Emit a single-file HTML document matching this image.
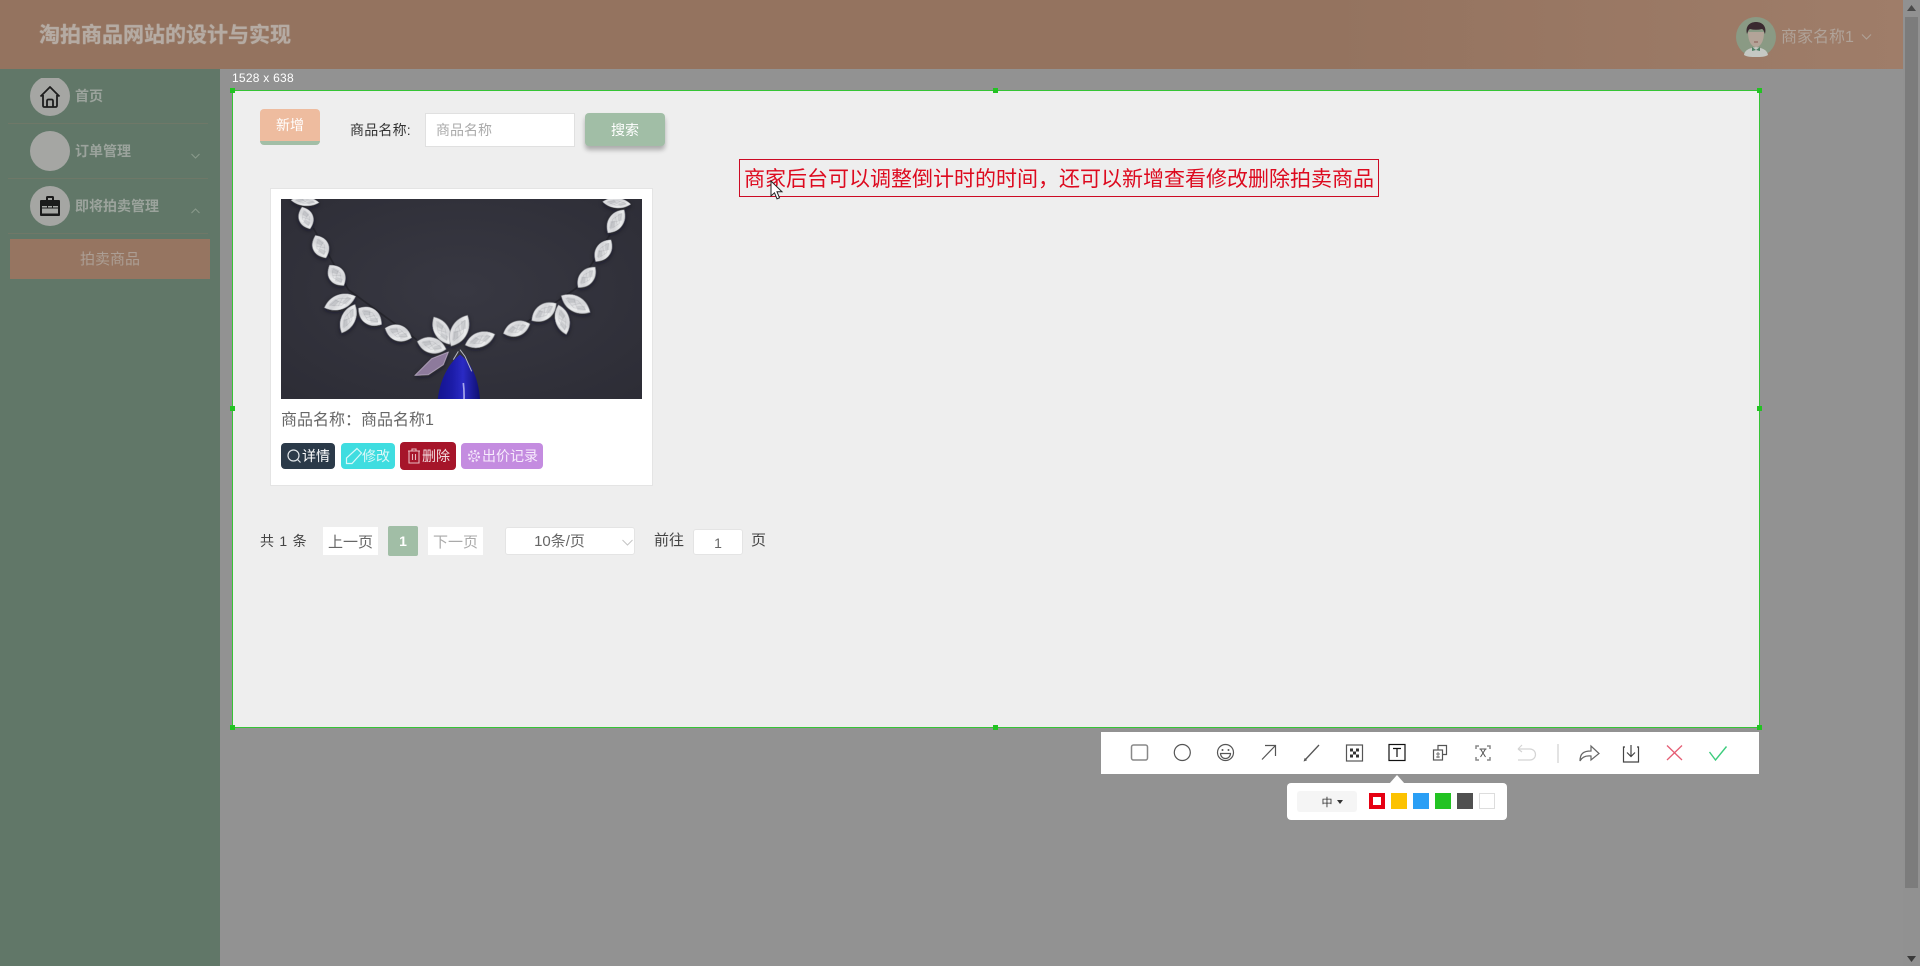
<!DOCTYPE html>
<html lang="zh-CN">
<head>
<meta charset="utf-8">
<title>淘拍商品网站的设计与实现</title>
<style>
html,body{margin:0;padding:0;width:1920px;height:966px;overflow:hidden;background:#929292;}
body{position:relative;font-family:"Liberation Sans","Noto Sans CJK SC",sans-serif;font-size:14px;}
.a{position:absolute;box-sizing:border-box;white-space:nowrap;}
.c{display:flex;align-items:center;justify-content:center;}
.t{line-height:20px;height:20px;}
.circle{left:30px;width:40px;height:40px;border-radius:50%;background:#a5a6a3;}
.mi{left:75px;color:#9ba39c;font-size:14px;font-weight:700;}
.dv{left:8px;width:200px;height:1px;background:#6f7868;}
.btn{color:#fff;border-radius:4px;top:443px;height:26px;}
.h{width:5px;height:5px;background:#22c322;}
.sw{top:793px;width:16px;height:16px;}
.pg{font-size:15px;}
svg{display:block;}
</style>
</head>
<body>
<!-- header -->
<div class="a" style="left:0;top:0;width:1903px;height:69px;background:linear-gradient(90deg,#94735f 0,#94735f 70%,#9f7d69 100%)"></div>
<div class="a" style="left:39px;top:22px;height:28px;line-height:28px;font-size:21px;font-weight:700;color:#b5aba3;text-shadow:0 0 1px #b5aba3">淘拍商品网站的设计与实现</div>
<svg class="a" style="left:1736px;top:17px" width="40" height="40" viewBox="0 0 40 40">
<circle cx="20" cy="20" r="20" fill="#8a9a84"/>
<path d="M8 38c1-6 7-7 12-8 5 1 11 2 12 8-3 2-7 2-12 2s-9 0-12-2z" fill="#c5c8c3"/>
<path d="M16 30l4 3 4-3v4l-4-1-4 1z" fill="#4f8066"/>
<path d="M12 15c0 10 4 15 8 15s8-5 8-15z" fill="#b3a498"/>
<path d="M11 17c-2-8 3-12 9-12s11 4 9 12c-1-2-1-4-3-5-4 1-8 1-12 0-2 1-2 3-3 5z" fill="#3a2a30"/>
<path d="M18 25h4" stroke="#8a5a55" stroke-width="1"/>
</svg>
<div class="a t" style="left:1781px;top:28px;font-size:16px;color:#b0a399">商家名称1</div>
<svg class="a" style="left:1861px;top:33px" width="11" height="8" viewBox="0 0 11 8"><path d="M1 1.500l4.500 4.500L10 1.500" fill="none" stroke="#b0a399"/></svg>

<!-- sidebar -->
<div class="a" style="left:0;top:69px;width:220px;height:897px;background:#617768"></div>
<div class="a" style="left:30px;top:78px;width:40px;height:38px;overflow:hidden"><div class="a circle" style="left:0;top:-2px"></div>
<svg class="a" style="left:9px;top:7px" width="22" height="24" viewBox="0 0 22 24"><path d="M1.500 11.500L11 2l9.500 9.500M4 10v10.500q0 1.500 1.500 1.500h11q1.500 0 1.500-1.500V10M8 22v-6q0-1.500 1.500-1.500h3q1.500 0 1.500 1.500v6" fill="none" stroke="#1d1d1d" stroke-width="1.800" stroke-linejoin="round"/></svg></div>
<div class="a t mi" style="top:86px">首页</div>
<div class="a dv" style="top:123px"></div>
<div class="a circle" style="top:131px"></div>
<div class="a t mi" style="top:141px">订单管理</div>
<svg class="a" style="left:191px;top:153px" width="9" height="6" viewBox="0 0 9 6"><path d="M.5 1l4 4 4-4" fill="none" stroke="#8a9a8c"/></svg>
<div class="a dv" style="top:178px"></div>
<div class="a circle" style="top:186px"></div>
<svg class="a" style="left:39px;top:195px" width="22" height="22" viewBox="0 0 22 22"><path d="M7 5V2.500Q7 1 8.500 1h5Q15 1 15 2.500V5h5q1 0 1 1v14q0 1-1 1H2q-1 0-1-1V6q0-1 1-1zM9 3v2h4V3zM3 11v1.500h5V11h1v1.500h4V11h1v1.500h5V11z" fill="#1b1b1b" fill-rule="evenodd"/><path d="M3 13.500h16v5H3z" fill="#a5a6a3"/></svg>
<div class="a t mi" style="top:196px">即将拍卖管理</div>
<svg class="a" style="left:191px;top:208px" width="9" height="6" viewBox="0 0 9 6"><path d="M.5 5l4-4 4 4" fill="none" stroke="#8a9a8c"/></svg>
<div class="a dv" style="top:233px"></div>
<div class="a c" style="left:10px;top:239px;width:200px;height:40px;background:#967561;color:#ac9e94;font-size:15px;padding-bottom:2px">拍卖商品</div>

<!-- selection label -->
<div class="a" style="left:232px;top:70px;height:16px;line-height:16px;color:#fff;font-size:12px;letter-spacing:.25px">1528 x 638</div>

<!-- selection -->
<div class="a" style="left:232px;top:90px;width:1528px;height:638px;background:#eeeeee;border:1px solid #35c435"></div>

<!-- toolbar form -->
<div class="a c" style="left:260px;top:109px;width:60px;height:36px;background:#eebc9f;border-bottom:4px solid #a2bea6;border-radius:4px;color:#fff;font-size:14px">新增</div>
<div class="a t" style="left:350px;top:120px;color:#333;letter-spacing:.2px">商品名称:</div>
<div class="a" style="left:425px;top:113px;width:150px;height:34px;background:#fff;border:1px solid #e0e0e0;line-height:32px;padding-left:10px;color:#aaa">商品名称</div>
<div class="a c" style="left:585px;top:113px;width:80px;height:33px;background:#a1bea6;border-radius:4px;color:#fff;box-shadow:0 4px 5px rgba(0,0,0,.28)">搜索</div>

<!-- annotation -->
<div class="a c" style="left:739px;top:159px;width:640px;height:38px;border:1px solid #cc0a24;color:#dd0a1f;font-size:21px">商家后台可以调整倒计时的时间&#xFF0C;还可以新增查看修改删除拍卖商品</div>

<!-- card -->
<div class="a" style="left:270px;top:188px;width:383px;height:298px;background:#fff;border:1px solid #e4e4e4"></div>
<svg class="a" style="left:281px;top:199px" width="361" height="200" viewBox="3 3 1083 600" preserveAspectRatio="none">
<defs>
<radialGradient id="bg" cx="50%" cy="45%" r="70%"><stop offset="0" stop-color="#383842"/><stop offset="1" stop-color="#2d2d36"/></radialGradient>
<linearGradient id="dm" x1="0" y1="0" x2="1" y2="1"><stop offset="0" stop-color="#eeeef0"/><stop offset=".45" stop-color="#d4d5d8"/><stop offset=".7" stop-color="#ecedee"/><stop offset="1" stop-color="#acaeb3"/></linearGradient>
<linearGradient id="bl" x1="0" y1="0" x2="1" y2="0"><stop offset="0" stop-color="#14148f"/><stop offset=".35" stop-color="#1c1ca8"/><stop offset=".6" stop-color="#2a2ac4"/><stop offset="1" stop-color="#0f0f70"/></linearGradient>
<filter id="soft" x="-5%" y="-5%" width="110%" height="110%"><feDropShadow dx="0" dy="5" stdDeviation="6" flood-color="#14141a" flood-opacity=".6"/><feGaussianBlur stdDeviation=".7"/></filter>
<g id="m"><path d="M-50 0C-34-22-18-30 0-30S34-22 50 0C34 22 18 30 0 30S-34 22-50 0z" fill="url(#dm)" stroke="#888a90" stroke-width="1.500"/><path d="M-34-6L-10-18-2-4-20 9zM6 4L26-11 36 3 14 18z" fill="#a8aab0" opacity=".4"/><path d="M-34 0L0-16 34 0 0 16zM-12-13L10 12M12-13L-9 13" fill="none" stroke="#9a9ca2" stroke-width="1.500" opacity=".5"/></g>
</defs>
<rect x="0" y="0" width="1092" height="612" fill="url(#bg)"/>
<path d="M100 90L205 275 410 425M700 400L890 270 990 110" fill="none" stroke="#26262d" stroke-width="5"/>
<g filter="url(#soft)">
<use href="#m" transform="translate(75 10) rotate(5) scale(.85 .45)"/>
<use href="#m" transform="translate(78 60) rotate(70) scale(.7 .72)"/>
<use href="#m" transform="translate(122 146) rotate(65) scale(.75 .8)"/>
<use href="#m" transform="translate(170 232) rotate(55) scale(.75 .8)"/>
<use href="#m" transform="translate(180 312) rotate(-20) scale(1 .74)"/>
<use href="#m" transform="translate(205 362) rotate(-65) scale(.95 .7)"/>
<use href="#m" transform="translate(270 355) rotate(35) scale(.85 .82)"/>
<use href="#m" transform="translate(355 405) rotate(20) scale(.85 .8)"/>
<use href="#m" transform="translate(455 442) rotate(15) scale(.9 .78)"/>
<use href="#m" transform="translate(485 398) rotate(60) scale(.95 .74)"/>
<use href="#m" transform="translate(538 398) rotate(-62) scale(1.050 .82)"/>
<use href="#m" transform="translate(600 425) rotate(-20) scale(.95 .74)"/>
<use href="#m" transform="translate(710 392) rotate(-20) scale(.85 .74)"/>
<use href="#m" transform="translate(792 342) rotate(-35) scale(.9 .78)"/>
<use href="#m" transform="translate(847 365) rotate(75) scale(.92 .7)"/>
<use href="#m" transform="translate(887 318) rotate(30) scale(1 .78)"/>
<use href="#m" transform="translate(920 238) rotate(-50) scale(.8 .72)"/>
<use href="#m" transform="translate(970 158) rotate(-55) scale(.8 .74)"/>
<use href="#m" transform="translate(1008 70) rotate(-55) scale(.85 .74)"/>
<use href="#m" transform="translate(1010 15) rotate(5) scale(.85 .5)"/>
<path d="M405 532L455 482 505 462 490 500 445 530z" fill="#8d7a9c" stroke="#c4b6cc" stroke-width="2"/>
</g>
<path d="M540 470C510 492 480 540 473 606L600 606C596 540 572 492 540 470z" fill="url(#bl)"/>
<path d="M540 455L555 475 575 520M520 485L535 460" fill="none" stroke="#b8bac2" stroke-width="3"/>
<path d="M550 555q3 25 2 51" fill="none" stroke="#a7a7ea" stroke-width="5"/>
</svg>
<div class="a" style="left:281px;top:409px;height:24px;line-height:24px;font-size:16px;color:#666">商品名称&#xFF1A;商品名称1</div>

<!-- card buttons -->
<div class="a btn" style="left:281px;width:54px;background:#2b3a49"><svg class="a" style="left:6px;top:6px" width="14" height="14" viewBox="0 0 14 14"><circle cx="6.500" cy="6.500" r="5.500" fill="none" stroke="#dfe4e8" stroke-width="1.200"/><path d="M10.500 10.500l3 3" stroke="#dfe4e8" stroke-width="1.200"/></svg><span class="a" style="left:21px;top:3px;line-height:20px">详情</span></div>
<div class="a btn" style="left:341px;width:54px;background:#3fdde0"><svg class="a" style="left:4px;top:4px" width="18" height="18" viewBox="0 0 18 18"><path d="M12 1.500l4.500 4.500-9.500 10.500H1.500V11zM1.500 16.500h5" fill="none" stroke="#d9f8f8" stroke-width="1.200"/></svg><span class="a" style="left:21px;top:3px;line-height:20px;color:#dcf8f8">修改</span></div>
<div class="a btn" style="left:400px;top:442px;width:56px;height:28px;background:#a6152a"><svg class="a" style="left:7px;top:6px" width="14" height="16" viewBox="0 0 14 16"><path d="M1 3h12M5 3V1h4v2M2 3v12h10V3M5.500 6v6M8.500 6v6" fill="none" stroke="#e8b9bf" stroke-width="1.100"/></svg><span class="a" style="left:22px;top:4px;line-height:20px;color:#f3dfe2">删除</span></div>
<div class="a btn" style="left:461px;width:82px;background:#c48ce0"><svg class="a" style="left:6px;top:6px" width="14" height="14" viewBox="0 0 14 14"><circle cx="7" cy="7" r="2.500" fill="none" stroke="#f0e0f8"/><circle cx="7" cy="7" r="5" fill="none" stroke="#f0e0f8" stroke-width="2.200" stroke-dasharray="2.200 1.700"/></svg><span class="a" style="left:21px;top:3px;line-height:20px;color:#f7ecfc">出价记录</span></div>

<!-- pagination -->
<div class="a t" style="left:260px;top:531px;color:#444;word-spacing:1.500px">共 1 条</div>
<div class="a c pg" style="left:323px;top:527px;width:55px;height:28px;background:#fff;color:#666">上一页</div>
<div class="a c" style="left:388px;top:526px;width:30px;height:30px;background:#a1bea6;color:#fff;font-weight:700;border-radius:2px">1</div>
<div class="a c pg" style="left:428px;top:527px;width:55px;height:28px;background:#fff;color:#aaa">下一页</div>
<div class="a c pg" style="left:505px;top:527px;width:130px;height:28px;background:#fff;border:1px solid #e4e4e4;border-radius:3px;color:#666;padding:0 21px 1px 0">10条/页</div>
<svg class="a" style="left:622px;top:539px" width="11" height="7" viewBox="0 0 11 7"><path d="M.5 1l5 5 5-5" fill="none" stroke="#c4c4c4"/></svg>
<div class="a t pg" style="left:654px;top:531px;color:#444">前往</div>
<div class="a c" style="left:693px;top:529px;width:50px;height:26px;background:#fff;border:1px solid #e4e4e4;border-radius:3px;color:#666;padding-top:1px">1</div>
<div class="a t pg" style="left:751px;top:531px;color:#444">页</div>

<!-- handles -->
<div class="a h" style="left:230px;top:88px"></div>
<div class="a h" style="left:993px;top:88px"></div>
<div class="a h" style="left:1757px;top:88px"></div>
<div class="a h" style="left:230px;top:406px"></div>
<div class="a h" style="left:1757px;top:406px"></div>
<div class="a h" style="left:230px;top:725px"></div>
<div class="a h" style="left:993px;top:725px"></div>
<div class="a h" style="left:1757px;top:725px"></div>

<!-- screenshot toolbar -->
<div class="a" style="left:1101px;top:732px;width:658px;height:42px;background:#fff"></div>
<svg class="a" style="left:1101px;top:732px" width="658" height="42" viewBox="1101 732 658 42" fill="none" stroke="#555" stroke-width="1.200">
<rect x="1131.500" y="745" width="16" height="15" rx="2" stroke="#888" stroke-width="1.500"/>
<circle cx="1182.300" cy="752.500" r="8" stroke="#555"/>
<circle cx="1225.500" cy="752.500" r="8"/><circle cx="1222.500" cy="750" r="1" fill="#555" stroke="none"/><circle cx="1228.500" cy="750" r="1" fill="#555" stroke="none"/><path d="M1220.500 753.500h10a5 5 0 0 1-10 0z"/>
<path d="M1262 759.500l13-13.500M1265 745.500h10.500V756"/>
<path d="M1305 760l14-15" stroke-width="1.300"/><path d="M1304.500 760.500l1.500-.5-1-1z" fill="#555"/>
<rect x="1346.500" y="745" width="16" height="16"/><path d="M1350 748.500h3v3h-3zM1356 748.500h3v3h-3zM1353 751.500h3v3h-3zM1350 754.500h3v3h-3zM1356 754.500h3v3h-3z" fill="#333" stroke="none"/>
<rect x="1389" y="744.500" width="16" height="16" stroke="#111"/><path d="M1393 748.500h8M1397 748.500v8.500" stroke="#111"/>
<rect x="1433.500" y="750" width="9" height="10"/><path d="M1438 750v-4.500h8.500v9H1443"/><path d="M1436 754h4M1436 757h4M1438 752v6" stroke-width=".8"/>
<path d="M1476 749v-3h3M1487 746h3v3M1490 757v3h-3M1479 760h-3v-3" stroke="#888" stroke-width="1.500"/><path d="M1479.500 749h7M1480.500 749l5 8M1485.500 749l-5 8" stroke-width="1"/>
<path d="M1518 749h12a4.500 4.500 0 0 1 0 11h-12M1518 749l4-4M1518 749l4 3" stroke="#d4d4d4"/>
<path d="M1558 744v19" stroke="#d0d0d0"/>
<path d="M1580 761c0-7 3-10 11-10v-5l8 7.500-8 6.500v-4c-5-.5-9 1-11 5z" stroke="#666"/>
<path d="M1625 747h-1.500v15h15v-15h-1.500M1631 745v11M1627 752.500l4 4 4-4" stroke="#444"/>
<path d="M1667 745.500l15 14.500M1682 745.500l-15 14.500" stroke="#e55d74" stroke-width="1.300"/>
<path d="M1709.500 752l6 8 11-13.500" stroke="#3ccc7c" stroke-width="1.400"/>
</svg>

<!-- text popover -->
<svg class="a" style="left:1388px;top:774px" width="18" height="10" viewBox="0 0 18 10"><path d="M9 1l8 9H1z" fill="#fff"/></svg>
<div class="a" style="left:1287px;top:783px;width:220px;height:37px;background:#fff;border-radius:4px"></div>
<div class="a" style="left:1297px;top:791px;width:60px;height:21px;background:#f5f5f5;border-radius:3px"></div>
<div class="a c" style="left:1320px;top:792px;width:14px;height:20px;font-size:11px;color:#333">中</div>
<svg class="a" style="left:1337px;top:800px" width="6" height="4" viewBox="0 0 6 4"><path d="M0 0h6L3 4z" fill="#333"/></svg>
<div class="a sw" style="left:1369px;background:#fff;border:4px solid #e60012"></div>
<div class="a sw" style="left:1391px;background:#fcc200"></div>
<div class="a sw" style="left:1413px;background:#2a9ff5"></div>
<div class="a sw" style="left:1435px;background:#22c322"></div>
<div class="a sw" style="left:1457px;background:#505050"></div>
<div class="a sw" style="left:1479px;background:#fff;border:1px solid #ddd"></div>

<!-- mouse cursor -->
<svg class="a" style="left:770px;top:180px" width="14" height="21" viewBox="0 0 14 21"><path d="M1 1v15l3.500-3.200 2.500 6 2.500-1-2.500-6h5z" fill="#fff" stroke="#222" stroke-width="1"/></svg>

<!-- scrollbar -->
<div class="a" style="left:1903px;top:0;width:17px;height:966px;background:#919191"></div>
<div class="a" style="left:1905px;top:17px;width:13px;height:871px;background:#7c7c7c"></div>
<svg class="a" style="left:1907px;top:5px" width="9" height="6" viewBox="0 0 9 6"><path d="M4.500 0L9 6H0z" fill="#4a4a4a"/></svg>
<svg class="a" style="left:1907px;top:956px" width="9" height="6" viewBox="0 0 9 6"><path d="M0 0h9L4.500 6z" fill="#3a3a3a"/></svg>
</body>
</html>
